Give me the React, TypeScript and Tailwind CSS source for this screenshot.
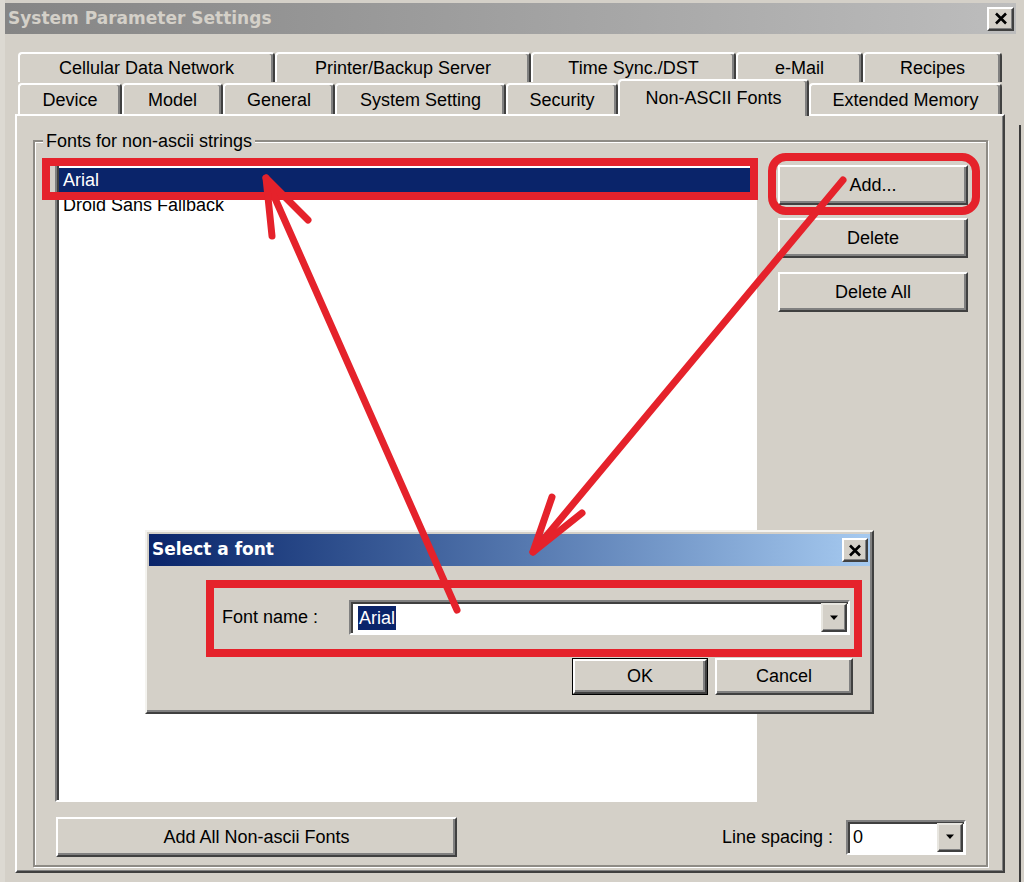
import React from "react";

const FONT = "font-['Liberation_Sans',Arial,sans-serif]";
const BOLD = "font-['DejaVu_Sans',Verdana,sans-serif] font-bold";

function CloseIcon() {
  return (
    <svg width="14" height="13" viewBox="0 0 14 13">
      <path d="M2 1.5 L12 11.5 M12 1.5 L2 11.5" stroke="#000" strokeWidth="2.6" strokeLinecap="butt" />
    </svg>
  );
}

function Arrow() {
  return (
    <svg width="10" height="6" viewBox="0 0 10 6">
      <path d="M1 0.5 L9 0.5 L5 5 Z" fill="#000" />
    </svg>
  );
}

function Btn({ label, className }: { label: string; className: string }) {
  return (
    <div
      className={
        "flex items-center justify-center bg-[#d4d0c8] border-2 border-t-white border-l-white border-r-[#404040] border-b-[#404040] shadow-[inset_-2px_-2px_0_#808080] text-[18px] text-black " +
        className
      }
    >
      {label}
    </div>
  );
}

function DropBtn({ className }: { className: string }) {
  return (
    <div
      className={
        "flex items-center justify-center bg-[#d4d0c8] border-2 border-t-[#e8e6e0] border-l-[#e8e6e0] border-r-[#404040] border-b-[#404040] shadow-[inset_-1px_-1px_0_#808080] " +
        className
      }
    >
      <Arrow />
    </div>
  );
}

const row1 = [
  { label: "Cellular Data Network", w: "w-[257px]" },
  { label: "Printer/Backup Server", w: "w-[256px]" },
  { label: "Time Sync./DST", w: "w-[205px]" },
  { label: "e-Mail", w: "w-[127px]" },
  { label: "Recipes", w: "w-[139px]" },
];

const row2 = [
  { label: "Device", w: "w-[104px]" },
  { label: "Model", w: "w-[101px]" },
  { label: "General", w: "w-[112px]" },
  { label: "System Setting", w: "w-[171px]" },
  { label: "Security", w: "w-[112px]" },
  { label: "Non-ASCII Fonts", w: "w-[191px]", sel: true },
  { label: "Extended Memory", w: "w-[193px]" },
];

const tabBase =
  "flex justify-center bg-[#d4d0c8] border-t-2 border-l-2 border-r-2 border-t-white border-l-white border-r-[#404040] rounded-t-[4px] shadow-[inset_-2px_0_0_#808080] text-[18px] text-black";

export default function App() {
  return (
    <div className={"relative w-[1024px] h-[882px] overflow-hidden bg-[#d4d0c8] flex " + FONT}>
      {/* main window */}
      <div className="w-[1019px] h-full flex flex-col border-l-[5px] border-[#dcd9d2]">
        {/* title bar */}
        <div className="mt-[3px] mr-[3px] h-[31px] flex items-center justify-between bg-gradient-to-r from-[#858585] to-[#bdbdbd]">
          <span className={"pl-[3px] text-[17px] text-[#d4d0c8] " + BOLD}>System Parameter Settings</span>
          <div className="mr-[2px] w-[27px] h-[24px] flex items-center justify-center bg-[#d4d0c8] border-2 border-t-white border-l-white border-r-[#404040] border-b-[#404040] shadow-[inset_-1px_-1px_0_#808080]">
            <CloseIcon />
          </div>
        </div>

        {/* tab row 1 */}
        <div className="mt-[18px] ml-[13px] flex h-[30px]">
          {row1.map((t) => (
            <div key={t.label} className={tabBase + " items-center h-[30px] " + t.w}>
              {t.label}
            </div>
          ))}
        </div>

        {/* tab row 2 */}
        <div className="mt-[1px] ml-[13px] flex h-[31px] items-end">
          {row2.map((t) =>
            t.sel ? (
              <div
                key={t.label}
                className={tabBase + " relative z-10 items-start pt-[4px] h-[37px] -mb-[2px] " + t.w}
              >
                {t.label}
              </div>
            ) : (
              <div key={t.label} className={tabBase + " items-center pt-[1px] h-[31px] " + t.w}>
                {t.label}
              </div>
            )
          )}
        </div>

        {/* tab panel */}
        <div className="ml-[10px] w-[990px] h-[759px] border-2 border-t-white border-l-white border-r-[#404040] border-b-[#404040] shadow-[inset_-1px_-1px_0_#808080] flex flex-col">
          {/* group box */}
          <div className="ml-[16px] mt-[24px] w-[955px] h-[727px] border-2 border-[#8e8b85] shadow-[inset_1px_1px_0_#ffffff,1px_1px_0_#ffffff] flex flex-col">
            <span className="self-start -mt-[11px] ml-[8px] px-[3px] bg-[#d4d0c8] text-[18px] leading-[20px] text-black">
              Fonts for non-ascii strings
            </span>

            <div className="mt-[9px] ml-[20px] flex">
              {/* list box */}
              <div className="w-[702px] h-[642px] bg-white border-2 border-t-[#808080] border-l-[#808080] border-r-white border-b-white shadow-[inset_2px_2px_0_#404040] pt-[6px] pl-[2px] pr-[2px] flex flex-col">
                <div className="h-[25px] flex items-center px-[4px] bg-[#0a246a] text-white text-[18px]">Arial</div>
                <div className="h-[25px] flex items-center px-[4px] text-black text-[18px]">Droid Sans Fallback</div>
              </div>
              {/* buttons */}
              <div className="ml-[21px] pt-[5px] flex flex-col gap-[13px]">
                <Btn label="Add..." className="w-[190px] h-[40px]" />
                <Btn label="Delete" className="w-[190px] h-[40px]" />
                <Btn label="Delete All" className="w-[190px] h-[40px] mt-[1px]" />
              </div>
            </div>

            <div className="mt-[15px] ml-[21px] mr-[20px] flex items-center">
              <Btn label="Add All Non-ascii Fonts" className="w-[401px] h-[40px]" />
              <span className="ml-auto text-[18px] text-black">Line spacing :</span>
              <div className="ml-[13px] w-[120px] h-[35px] bg-white border-2 border-t-[#808080] border-l-[#808080] border-r-white border-b-white shadow-[inset_2px_2px_0_#404040] flex items-center justify-between pl-[5px] pr-[1px]">
                <span className="text-[18px] text-black">0</span>
                <DropBtn className="w-[26px] h-[29px]" />
              </div>
            </div>
          </div>
        </div>
      </div>

      {/* right strip */}
      <div className="flex-1 flex">
        <div className="mt-[125px] w-[2px] bg-[#3a3a3a]" />
      </div>

      {/* Select a font dialog (floating over the window) */}
      <div className="absolute left-[145px] top-[530px] w-[729px] h-[184px] bg-[#d4d0c8] border-2 border-t-[#f4f3ef] border-l-[#f4f3ef] border-r-[#404040] border-b-[#404040] shadow-[inset_-2px_-2px_0_#808080] p-[2px] flex flex-col">
        <div className="h-[32px] flex items-center justify-between bg-gradient-to-r from-[#0a246a] to-[#a6caf0] pl-[3px] pr-[2px]">
          <span className={"text-[17px] text-white " + BOLD}>Select a font</span>
          <div className="w-[26px] h-[24px] flex items-center justify-center bg-[#d4d0c8] border-2 border-t-white border-l-white border-r-[#404040] border-b-[#404040] shadow-[inset_-1px_-1px_0_#808080]">
            <CloseIcon />
          </div>
        </div>
        <div className="mt-[34px] pl-[73px] flex items-center">
          <span className="w-[127px] text-[18px] text-black">Font name :</span>
          <div className="w-[501px] h-[35px] bg-white border-2 border-t-[#808080] border-l-[#808080] border-r-white border-b-white shadow-[inset_2px_2px_0_#404040] flex items-center justify-between pl-[7px] pr-[1px]">
            <span className="bg-[#0a246a] text-white text-[18px] leading-[24px] px-[1px]">Arial</span>
            <DropBtn className="w-[26px] h-[29px]" />
          </div>
        </div>
        <div className="mt-[23px] pr-[17px] flex justify-end">
          <div className="border border-black">
            <Btn label="OK" className="w-[134px] h-[35px]" />
          </div>
          <Btn label="Cancel" className="ml-[7px] w-[138px] h-[37px]" />
        </div>
      </div>

      {/* red annotations */}
      <svg className="absolute inset-0 pointer-events-none" width="1024" height="882" viewBox="0 0 1024 882">
        <g fill="none" stroke="#e5222b" strokeWidth="8" strokeLinecap="round" strokeLinejoin="round">
          <rect x="46" y="162" width="708" height="34" strokeLinejoin="miter" />
          <rect x="772" y="157" width="204" height="54" rx="14" />
          <rect x="210" y="584" width="648" height="69" strokeLinejoin="miter" />
          <path d="M457 610 L266 178" strokeWidth="7" />
          <path d="M272 236 L266 178 L308 220" strokeWidth="7" />
          <path d="M843 180 L533 552" strokeWidth="7" />
          <path d="M552 497 L533 552 L582 513" strokeWidth="7" />
        </g>
      </svg>
    </div>
  );
}
